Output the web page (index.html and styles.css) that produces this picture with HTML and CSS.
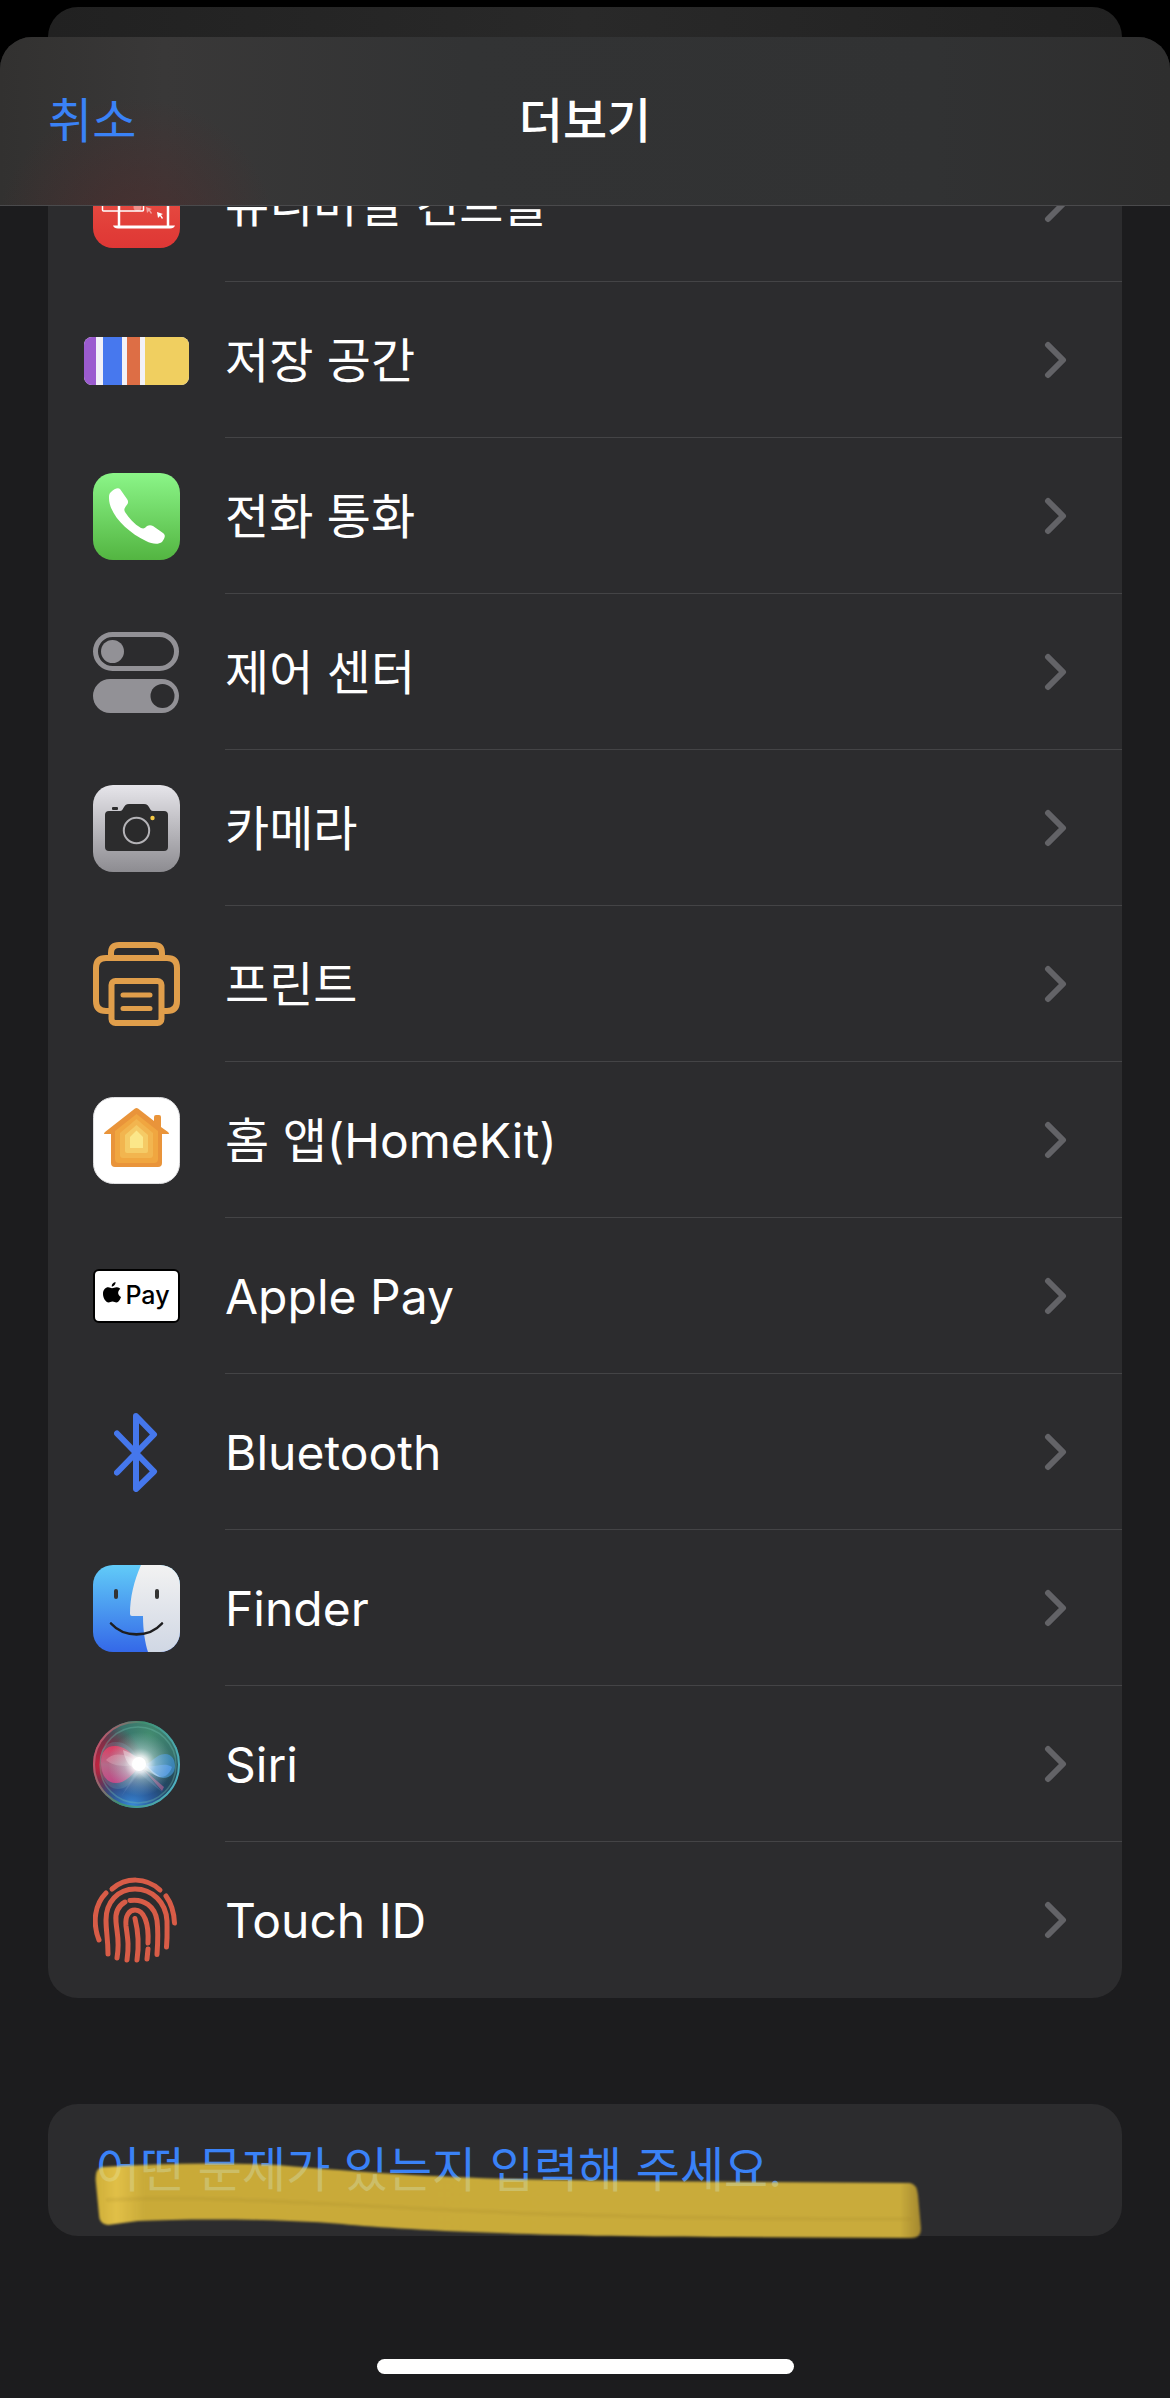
FILE: index.html
```html
<!DOCTYPE html>
<html lang="ko">
<head>
    <meta charset="UTF-8">
    <meta name="viewport" content="width=device-width, initial-scale=1.0">
    <title>더보기</title>
    <link rel="stylesheet" href="styles.css">
</head>
<body>
    <!-- Card behind the sheet -->
    <div class="back-card"></div>

    <div class="sheet">
        <header class="sheet-header">
            <button class="cancel">취소</button>
            <h1>더보기</h1>
        </header>

        <main>
            <ul class="topics">
                <li><a href="#">
                    <span class="icon"><svg width="87" height="87" viewBox="0 0 87 87">
                        <defs><linearGradient id="red" x1="0" y1="0" x2="0" y2="1"><stop offset="0" stop-color="#ec5b4c"/><stop offset=".8" stop-color="#e13d38"/><stop offset="1" stop-color="#df3735"/></linearGradient></defs>
                        <rect width="87" height="87" rx="20" fill="url(#red)"/>
                        <g fill="none" stroke="#fff">
                            <path d="M26 66V26h49v40" stroke-width="2.5"/>
                            <rect x="9.500" y="28" width="41" height="22" rx="1" stroke-width="1.5"/>
                        </g>
                        <path d="M20 64.500h62q-1 3-5 3H25q-4 0-5-3z" fill="#fff"/>
                        <circle cx="44.500" cy="46" r="4" fill="#fff" opacity=".4"/>
                        <path d="M53 46l6 2-2 1 2 3-1 1-2-3-2 2z" fill="#fff" opacity=".5"/>
                        <path d="M64 51l6 2-2 1 2 3-1 1-2-3-2 2z" fill="#fff"/>
                    </svg></span>
                    <span class="label">유니버설 컨트롤</span>
                    <svg class="chevron" viewBox="0 0 24 38"><path d="M4 4l15 15L4 34"/></svg>
                </a></li>
                <li><a href="#">
                    <span class="icon"><svg width="105" height="50" viewBox="0 -2 105 50">
                        <clipPath id="bar"><rect width="105" height="48" rx="8"/></clipPath>
                        <g clip-path="url(#bar)">
                            <rect width="105" height="48" fill="#f2f1f7"/>
                            <rect width="12" height="48" fill="#9b5bcf"/>
                            <rect x="19" width="19" height="48" fill="#4778ee"/>
                            <rect x="43" width="13" height="48" fill="#dd6e45"/>
                            <rect x="61" width="44" height="48" fill="#f0cf60"/>
                        </g>
                    </svg></span>
                    <span class="label">저장 공간</span>
                    <svg class="chevron" viewBox="0 0 24 38"><path d="M4 4l15 15L4 34"/></svg>
                </a></li>
                <li><a href="#">
                    <span class="icon"><svg width="87" height="87" viewBox="0 0 87 87">
                        <defs><linearGradient id="green" x1="0" y1="0" x2="0" y2="1"><stop offset="0" stop-color="#8bf588"/><stop offset="1" stop-color="#53b541"/></linearGradient></defs>
                        <rect width="87" height="87" rx="20" fill="url(#green)"/>
                        <path d="M18 19c3-3 7-5 9-3l7 10c2 3 1 5-1 7-2 3-2 4-1 6 4 6 9 12 16 16 3 1 4 0 6-2 2-1 4-1 6 0l10 7c3 2 2 5-1 9-4 3-10 2-16-1C34 59 16 41 16 25c0-3 0-4 2-6z" fill="#fff"/>
                    </svg></span>
                    <span class="label">전화 통화</span>
                    <svg class="chevron" viewBox="0 0 24 38"><path d="M4 4l15 15L4 34"/></svg>
                </a></li>
                <li><a href="#">
                    <span class="icon"><svg width="87" height="81" viewBox="0 0 87 81">
                        <rect x="2.5" y="2.5" width="81" height="34" rx="17" fill="none" stroke="#929196" stroke-width="5"/>
                        <circle cx="19.5" cy="19.5" r="11.5" fill="#929196"/>
                        <rect y="47" width="86" height="34" rx="17" fill="#929196"/>
                        <circle cx="69.5" cy="64" r="12" fill="#2c2c2e"/>
                    </svg></span>
                    <span class="label">제어 센터</span>
                    <svg class="chevron" viewBox="0 0 24 38"><path d="M4 4l15 15L4 34"/></svg>
                </a></li>
                <li><a href="#">
                    <span class="icon"><svg width="87" height="87" viewBox="0 0 87 87">
                        <defs><linearGradient id="grey" x1="0" y1="0" x2="0" y2="1"><stop offset="0" stop-color="#e6e5ea"/><stop offset="1" stop-color="#8d8c91"/></linearGradient></defs>
                        <rect width="87" height="87" rx="20" fill="url(#grey)"/>
                        <rect x="19" y="22" width="6" height="3" rx="1" fill="#2c2c2d"/>
                        <path d="M16 26h11c4 0 3-7 9-7h15c6 0 5 7 9 7h11q4 0 4 4v32q0 4-4 4H16q-4 0-4-4V30q0-4 4-4z" fill="#2c2c2d"/>
                        <circle cx="43.5" cy="45.5" r="12.7" fill="#2a2a2b" stroke="#b4b3b7" stroke-width="2"/>
                        <circle cx="59.5" cy="33" r="2.2" fill="#f6c944"/>
                    </svg></span>
                    <span class="label">카메라</span>
                    <svg class="chevron" viewBox="0 0 24 38"><path d="M4 4l15 15L4 34"/></svg>
                </a></li>
                <li><a href="#">
                    <span class="icon"><svg width="87" height="84" viewBox="0 0 87 84" fill="none" stroke="#e09e4b" stroke-width="6">
                        <path d="M18 16V11q0-8 8-8h35q8 0 8 8v5"/>
                        <path d="M18 69h-5q-10 0-10-10V26q0-10 10-10h61q10 0 10 10v33q0 10-10 10h-5"/>
                        <rect x="18.5" y="39" width="50" height="42" rx="4"/>
                        <path d="M30 53h27M30 66.5h27" stroke-width="5" stroke-linecap="round"/>
                    </svg></span>
                    <span class="label">프린트</span>
                    <svg class="chevron" viewBox="0 0 24 38"><path d="M4 4l15 15L4 34"/></svg>
                </a></li>
                <li><a href="#">
                    <span class="icon"><svg width="87" height="87" viewBox="0 0 87 87">
                        <rect x=".5" y=".5" width="86" height="86" rx="20" fill="#fff" stroke="#dedee0"/>
                        <path d="M42 11.5q1.500-1 3 0L61 24v-4q0-2 2-2h3q2 0 2 2v10l7 5q2 2 0 2h-6v29q0 4-4 4H22q-4 0-4-4V37h-6q-2 0 0-2z" fill="#e9943a"/>
                        <path d="M43.500 17L65 34v28q0 4-4 4H26q-4 0-4-4V34z" fill="#f0a640"/>
                        <path d="M43.500 22L60 36v22q0 3-3 3H30q-3 0-3-3V36z" fill="#f2b54f"/>
                        <path d="M43.500 28L55 38v16q0 2-2 2H34q-2 0-2-2V38z" fill="#f5cb66"/>
                        <path d="M43.500 33.500L50 40v11H37V40z" fill="#fbe789"/>
                    </svg></span>
                    <span class="label">홈 앱(HomeKit)</span>
                    <svg class="chevron" viewBox="0 0 24 38"><path d="M4 4l15 15L4 34"/></svg>
                </a></li>
                <li><a href="#">
                    <span class="icon"><span class="pay">
                        <svg width="18" height="22" viewBox="0 0 18 22"><path d="M9 6.300C10.500 6 12 5 14 5.200c1.500.1 2.600.8 3.300 1.800-3.200 2-2.600 6.500.7 7.900-.8 2.300-2.300 5.400-4.600 5.500-1.600 0-2-.9-3.900-.9s-2.400.9-3.900.9C2.800 20.400 0 15.900 0 11.900c0-4.200 2.600-6.600 5.200-6.600 1.600 0 2.700.9 3.800 1zM8.700 4.500C8.500 2.200 10.500.3 12.500 0c.3 2.300-1.600 4.500-3.800 4.500z"/></svg>
                        <span>Pay</span>
                    </span></span>
                    <span class="label">Apple Pay</span>
                    <svg class="chevron" viewBox="0 0 24 38"><path d="M4 4l15 15L4 34"/></svg>
                </a></li>
                <li><a href="#">
                    <span class="icon"><svg width="46" height="80" viewBox="1 -1 46 80">
                        <path d="M4 20.500L41 58.500 23 76V3l18 18.500L4 59.500" fill="none" stroke="#4577ec" stroke-width="6" stroke-linecap="round" stroke-linejoin="round"/>
                    </svg></span>
                    <span class="label">Bluetooth</span>
                    <svg class="chevron" viewBox="0 0 24 38"><path d="M4 4l15 15L4 34"/></svg>
                </a></li>
                <li><a href="#">
                    <span class="icon"><svg width="87" height="87" viewBox="0 0 87 87">
                        <defs>
                            <linearGradient id="face" x1="0" y1="0" x2="0" y2="1"><stop offset="0" stop-color="#61cbf8"/><stop offset="1" stop-color="#3468e8"/></linearGradient>
                            <linearGradient id="side" x1="0" y1="0" x2="0" y2="1"><stop offset="0" stop-color="#f2f2f2"/><stop offset="1" stop-color="#d0d7e4"/></linearGradient>
                            <clipPath id="tile"><rect width="87" height="87" rx="20"/></clipPath>
                        </defs>
                        <g clip-path="url(#tile)">
                            <rect width="87" height="87" fill="url(#face)"/>
                            <path d="M48 0C41 16 37 32 37 49q0 2 2 2h11c0 14 2 27 5 36h32V0z" fill="url(#side)"/>
                        </g>
                        <rect x="21" y="24" width="4" height="10" rx="2" fill="#333"/>
                        <rect x="62" y="24" width="4" height="10" rx="2" fill="#333"/>
                        <path d="M18 58.500c13 14.500 38 14.500 51 0" fill="none" stroke="#1e1e20" stroke-width="2.6" stroke-linecap="round"/>
                    </svg></span>
                    <span class="label">Finder</span>
                    <svg class="chevron" viewBox="0 0 24 38"><path d="M4 4l15 15L4 34"/></svg>
                </a></li>
                <li><a href="#">
                    <span class="icon"><svg width="87" height="87" viewBox="0 0 87 87">
                        <defs>
                            <linearGradient id="rim" x1="0" y1=".3" x2="1" y2=".6"><stop offset="0" stop-color="#c8506a"/><stop offset=".45" stop-color="#3f8f70"/><stop offset="1" stop-color="#4fb0c0"/></linearGradient>
                            <radialGradient id="orbRed" cx=".08" cy=".5" r=".5"><stop offset="0" stop-color="#c4233f"/><stop offset=".5" stop-color="#9a2642" stop-opacity=".8"/><stop offset="1" stop-color="#7a2038" stop-opacity="0"/></radialGradient>
                            <radialGradient id="orbGreen" cx=".65" cy=".15" r=".6"><stop offset="0" stop-color="#438c70"/><stop offset=".6" stop-color="#3b7a70" stop-opacity=".8"/><stop offset="1" stop-color="#2c6068" stop-opacity="0"/></radialGradient>
                            <radialGradient id="orbBlue" cx=".45" cy="1" r=".55"><stop offset="0" stop-color="#3b8ee0"/><stop offset=".5" stop-color="#2a5aa0" stop-opacity=".8"/><stop offset="1" stop-color="#1c3f74" stop-opacity="0"/></radialGradient>
                            <radialGradient id="glow"><stop offset="0" stop-color="#fff"/><stop offset=".25" stop-color="#fff" stop-opacity=".85"/><stop offset=".5" stop-color="#cfe8e8" stop-opacity=".45"/><stop offset="1" stop-color="#a5c8c8" stop-opacity="0"/></radialGradient>
                            <linearGradient id="lobeRed" x1="0" y1="0" x2="0" y2="1"><stop offset="0" stop-color="#f03860"/><stop offset=".5" stop-color="#b87090"/><stop offset="1" stop-color="#d64488"/></linearGradient>
                        </defs>
                        <circle cx="43.5" cy="43.5" r="43.5" fill="#24485a"/>
                        <circle cx="43.5" cy="43.5" r="43.5" fill="url(#orbGreen)"/>
                        <circle cx="43.5" cy="43.5" r="43.5" fill="url(#orbRed)"/>
                        <circle cx="43.5" cy="43.5" r="43.5" fill="url(#orbBlue)"/>
                        <circle cx="43.5" cy="43.5" r="42.5" fill="none" stroke="url(#rim)" stroke-width="2"/>
                        <circle cx="45" cy="44" r="38" fill="none" stroke="#6fc0b0" stroke-opacity=".35" stroke-width="1.5"/>
                        <path d="M48 43C40 26 32 21 23 21 12 21 6 30 7 43c1 15 8 25 18 25 11 0 18-12 23-25z" fill="#6a9db0" opacity=".3"/>
                        <path d="M48 43C38 31 31 25 22 25 13 25 8 31 8 42c0 12 6 20 15 20 10 0 17-9 25-19z" fill="url(#lobeRed)" opacity=".85"/>
                        <path d="M46 43C34 31 19 31 13 39c8 7 21 7 33 4z" fill="#f4c4d0" opacity=".3"/>
                        <path d="M48 43c10 2 14-10 24-10 7 0 10 6 10 12s-4 12-12 12-12-9-22-14z" fill="#4292cf" opacity=".75"/>
                        <path d="M50 43c9 6 20-3 29 3-2 6-6 10-11 10-8 0-10-8-18-13z" fill="#5aa0f4" opacity=".7"/>
                        <path d="M46 45L28 76l18-24 24 20z" fill="#6a8bc0" opacity=".3"/>
                        <path d="M50 48l21 18-2 4z" fill="#dc6aa0" opacity=".5"/>
                        <circle cx="47" cy="43" r="32" fill="url(#glow)"/>
                        <path d="M30 29c9 3 14 7 18 10 6 5 12 13 20 17-10-2-15-9-24-9-8 0-12-8-14-18z" fill="#fff" opacity=".35"/>
                        <circle cx="46" cy="43" r="7" fill="#fff"/>
                    </svg></span>
                    <span class="label">Siri</span>
                    <svg class="chevron" viewBox="0 0 24 38"><path d="M4 4l15 15L4 34"/></svg>
                </a></li>
                <li><a href="#">
                    <span class="icon"><svg width="87" height="87" viewBox="0 1 87 87" fill="none" stroke="#d85c47" stroke-width="5" stroke-linecap="round">
                        <path d="M19 13c14-12 34-12 48 1"/>
                        <path d="M73 20c5 7 8 16 8.500 27"/>
                        <path d="M13 17C2 28-1 46 6 64"/>
                        <path d="M15 78c0-16-2-22-2-34 0-18 12-31 29-31s31 13 32 32c0 8 .5 14-.5 26"/>
                        <path d="M32 26c-7 4-10 11-9 20 1 12 4 19 1 36"/>
                        <path d="M37 24.500c14-2 25 6 27 20 1 8 1 20 0 34"/>
                        <path d="M34 84c2-14 1-20-1-34-1-10 3-16 9-16 9 0 14 13 13 33"/>
                        <path d="M55 73l-1 10"/>
                        <path d="M42 42.500c4 16 4 28 2 41.500"/>
                    </svg></span>
                    <span class="label">Touch ID</span>
                    <svg class="chevron" viewBox="0 0 24 38"><path d="M4 4l15 15L4 34"/></svg>
                </a></li>
            </ul>

            <div class="describe">
                <button>어떤 문제가 있는지 입력해 주세요.</button>
                <!-- Highlighter stroke -->
                <svg class="marker" width="832" height="84" viewBox="0 0 832 84">
                    <defs><linearGradient id="ink" x1="0" y1="0" x2="1" y2="0"><stop offset="0" stop-color="#f8d03c" stop-opacity=".8"/><stop offset=".025" stop-color="#ffd84c" stop-opacity=".86"/><stop offset=".06" stop-color="#f8d03c" stop-opacity=".77"/><stop offset=".975" stop-color="#f8d240" stop-opacity=".77"/><stop offset="1" stop-color="#d8b030" stop-opacity=".7"/></linearGradient></defs>
                    <path d="M10 9Q100 3 186 7C310 18 400 22 536 23L818 25q7 1 8 12l3 34q0 9-10 9L640 79C450 79 310 72 250 66 170 60 90 61 46 63L16 67q-9-1-9-10L4 26Q2 11 10 9z" fill="url(#ink)"/>
                    <path d="M14 42C200 34 300 62 820 61" fill="none" stroke="#a98d2c" stroke-opacity=".2" stroke-width="4"/>
                </svg>
            </div>
        </main>

        <div class="home-bar"></div>
    </div>
</body>
</html>
```

FILE: styles.css
```css
* {
    margin: 0;
    padding: 0;
    box-sizing: border-box;
}
body {
    font-family: Inter, "Noto Sans CJK KR", sans-serif;
    font-size: 48px;
    background-color: #000;
    color: #fff;
    min-height: 100vh;
    display: flex;
    flex-direction: column;
    padding-top: 7px;
}
button {
    font: inherit;
    color: #3a82f7;
    background: none;
    border: none;
    cursor: pointer;
}
.back-card {
    height: 30px;
    margin: 0 48px;
    border-radius: 30px 30px 0 0;
    background: linear-gradient(90deg, #212121, #292929 50%, #212121);
}
.sheet {
    flex: 1;
    display: flex;
    flex-direction: column;
    background-color: #1c1c1e;
    border-radius: 32px 32px 0 0;
    overflow: hidden;
}
.sheet-header {
    position: relative;
    z-index: 1;
    height: 169px;
    padding: 0 48px 8px;
    display: grid;
    grid-template-columns: 1fr auto 1fr;
    align-items: center;
    border-bottom: 1px solid #4a4a4c;
    background: radial-gradient(circle at 136px 200px, rgba(90, 40, 40, 0.5), transparent 140px),
        linear-gradient(90deg, #323130, #393838 14%, #323334 40%, #313233 80%, #2e2e2e);
}
.cancel {
    justify-self: start;
}
.sheet-header h1 {
    font-size: 48px;
    font-weight: 500;
}
main {
    flex: 1;
    padding: 0 48px;
}
/* The list is scrolled partly under the header */
.topics {
    list-style: none;
    margin-top: -80px;
    margin-bottom: 106px;
    background-color: #2c2c2e;
    border-radius: 30px;
    overflow: hidden;
}
.topics a {
    display: grid;
    grid-template-columns: 177px 1fr auto;
    align-items: center;
    height: 156px;
    color: inherit;
    text-decoration: none;
}
.icon {
    display: flex;
    justify-content: center;
}
.label {
    grid-column: 2 / 4;
    grid-row: 1;
    height: 156px;
    line-height: 158px;
    border-bottom: 1px solid #444446;
}
.topics li:last-child .label {
    border-bottom: none;
}
.chevron {
    grid-column: 3;
    grid-row: 1;
    width: 24px;
    height: 38px;
    margin-right: 54px;
    fill: none;
    stroke: #636367;
    stroke-width: 6px;
    stroke-linecap: round;
    stroke-linejoin: round;
}
.pay {
    display: flex;
    align-items: center;
    justify-content: center;
    gap: 4px;
    width: 87px;
    height: 54px;
    padding-bottom: 3px;
    background-color: #fff;
    border: 2px solid #000;
    border-radius: 6px;
    color: #000;
    font-size: 25px;
    font-weight: 500;
    line-height: 30px;
}
.pay svg {
    margin-bottom: 3px;
}
.describe {
    position: relative;
    background-color: #2c2c2e;
    border-radius: 30px;
}
.describe button {
    display: block;
    width: 100%;
    height: 132px;
    padding: 0 48px 8px;
    text-align: left;
}
.marker {
    position: absolute;
    left: 44px;
    top: 54px;
    filter: blur(1px);
    pointer-events: none;
}
.home-bar {
    width: 417px;
    height: 15px;
    margin: 0 auto 24px;
    border-radius: 8px;
    background-color: #fff;
}
```
